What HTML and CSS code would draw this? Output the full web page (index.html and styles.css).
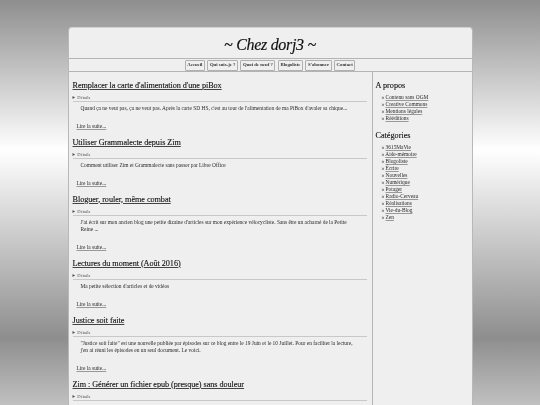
FILE: index.html
```html
<!DOCTYPE html>
<html lang="fr">
<head>
<meta charset="utf-8">
<title>Chez dorj3</title>
<link rel="stylesheet" href="styles.css">
</head>
<body>
<div class="page">
  <header class="masthead"><h1>~ Chez dorj3 ~</h1></header>
  <nav class="menu">
    <a href="#">Accueil</a><a href="#">Qui suis-je ?</a><a href="#">Quoi de neuf ?</a><a href="#">Blogoliste</a><a href="#">S'abonner</a><a href="#">Contact</a>
  </nav>
  <div class="columns">
    <main class="posts">
      <article class="post">
        <h2><a href="#">Remplacer la carte d'alimentation d'une piBox</a></h2>
        <details class="meta"><summary>Détails</summary></details>
        <p>Quand ça ne veut pas, ça ne veut pas. Après la carte SD HS, c'est au tour de l'alimentation de ma PiBox d'avaler sa chique...</p>
        <a class="more" href="#">Lire la suite...</a>
      </article>
      <article class="post">
        <h2><a href="#">Utiliser Grammalecte depuis Zim</a></h2>
        <details class="meta"><summary>Détails</summary></details>
        <p>Comment utiliser Zim et Grammalecte sans passer par Libre Office</p>
        <a class="more" href="#">Lire la suite...</a>
      </article>
      <article class="post">
        <h2><a href="#">Bloguer, rouler, même combat</a></h2>
        <details class="meta"><summary>Détails</summary></details>
        <p>J'ai écrit sur mon ancien blog une petite dizaine d'articles sur mon expérience vélocycliste. Sans être un acharné de la Petite Reine ...</p>
        <a class="more" href="#">Lire la suite...</a>
      </article>
      <article class="post">
        <h2><a href="#">Lectures du moment (Août 2016)</a></h2>
        <details class="meta"><summary>Détails</summary></details>
        <p>Ma petite sélection d'articles et de vidéos</p>
        <a class="more" href="#">Lire la suite...</a>
      </article>
      <article class="post">
        <h2><a href="#">Justice soit faite</a></h2>
        <details class="meta"><summary>Détails</summary></details>
        <p>"Justice soit faite" est une nouvelle publiée par épisodes sur ce blog entre le 19 Juin et le 10 Juillet. Pour en faciliter la lecture, j'en ai réuni les épisodes en un seul document. Le voici.</p>
        <a class="more" href="#">Lire la suite...</a>
      </article>
      <article class="post">
        <h2><a href="#">Zim : Générer un fichier epub (presque) sans douleur</a></h2>
        <details class="meta"><summary>Détails</summary></details>
      </article>
    </main>
    <aside class="side">
      <h3>A propos</h3>
      <ul>
        <li><a href="#">Contenu sans OGM</a></li>
        <li><a href="#">Creative Commons</a></li>
        <li><a href="#">Mentions légales</a></li>
        <li><a href="#">Rééditions</a></li>
      </ul>
      <h3>Catégories</h3>
      <ul>
        <li><a href="#">3615MaVie</a></li>
        <li><a href="#">Aide-mémoire</a></li>
        <li><a href="#">Blogoliste</a></li>
        <li><a href="#">Écrire</a></li>
        <li><a href="#">Nouvelles</a></li>
        <li><a href="#">Numérique</a></li>
        <li><a href="#">Potager</a></li>
        <li><a href="#">Radio-Cerveau</a></li>
        <li><a href="#">Réalisations</a></li>
        <li><a href="#">Vie-du-Blog</a></li>
        <li><a href="#">Zen</a></li>
      </ul>
    </aside>
  </div>
</div>
</body>
</html>
```
FILE: styles.css
```css
html {
  height: 100%;
  overflow: hidden;
}

body {
  margin: 0;
  height: 100%;
  overflow: hidden;
  font-family: "Liberation Serif", serif;
  color: #2a2a2a;
  background: repeating-linear-gradient(180deg, #8e8e8e 0, #ffffff 150px, #8e8e8e 338px);
}

a {
  color: inherit;
  text-decoration-color: #999;
}

.page {
  box-sizing: border-box;
  width: 405px;
  margin: 27px auto 0;
  background: #efefef;
  border: 1px solid #b8b8b8;
  border-top-color: #d0d0d0;
  border-bottom: 0;
  border-radius: 4px 4px 0 0;
  filter: blur(0.25px);
}

.masthead {
  box-sizing: border-box;
  height: 31px;
  padding-top: 3px;
  display: flex;
  align-items: center;
  justify-content: center;
  border-bottom: 1px solid #b4b4b4;
}

.masthead h1 {
  margin: 0;
  font-size: 16px;
  letter-spacing: -0.3px;
  font-weight: normal;
  font-style: italic;
  -webkit-text-stroke: 0.15px #111;
  color: #111;
}

.menu {
  height: 12px;
  display: flex;
  align-items: center;
  justify-content: center;
  gap: 2.5px;
  border-bottom: 1px solid #b4b4b4;
}

.menu a {
  padding: 1.5px 1.5px;
  border: 0.6px solid #b0b0b0;
  border-radius: 1px;
  font-size: 4.8px;
  line-height: 6px;
  font-weight: bold;
  text-decoration: none;
  color: #333;
}

.columns {
  display: flex;
}

.posts {
  width: 304px;
  box-sizing: border-box;
  padding: 7.5px 5px 0 4px;
  border-right: 1px solid #b4b4b4;
}

.post {
  margin-bottom: 7px;
}

.post h2 {
  margin: 0 0 4px;
  font-size: 8.2px;
  letter-spacing: -0.05px;
  line-height: 11px;
  font-weight: normal;
  -webkit-text-stroke: 0.12px #111;
  color: #111;
}

.post h2 a {
  text-decoration-color: #444;
}

.meta {
  font-size: 4.6px;
  line-height: 5px;
  padding-bottom: 1px;
  border-bottom: 0.6px solid #c8c8c8;
  color: #555;
}

.post p {
  margin: 3px 0 11px;
  padding-left: 8px;
  max-width: 280px;
  font-size: 5.4px;
  line-height: 7px;
}

.more {
  display: block;
  margin-left: 4px;
  font-size: 5.4px;
  line-height: 7px;
}

.side {
  flex: 1;
  padding: 7.5px 3px 0;
}

.side h3 {
  margin: 0;
  font-size: 8.2px;
  line-height: 11px;
  font-weight: normal;
  -webkit-text-stroke: 0.12px #111;
  color: #111;
}

.side ul {
  list-style: none;
  margin: 3.5px 0 7.5px;
  padding: 0 0 0 6px;
}

.side li {
  font-size: 5.4px;
  line-height: 7px;
}

.side li::before {
  content: "» ";
}
```
